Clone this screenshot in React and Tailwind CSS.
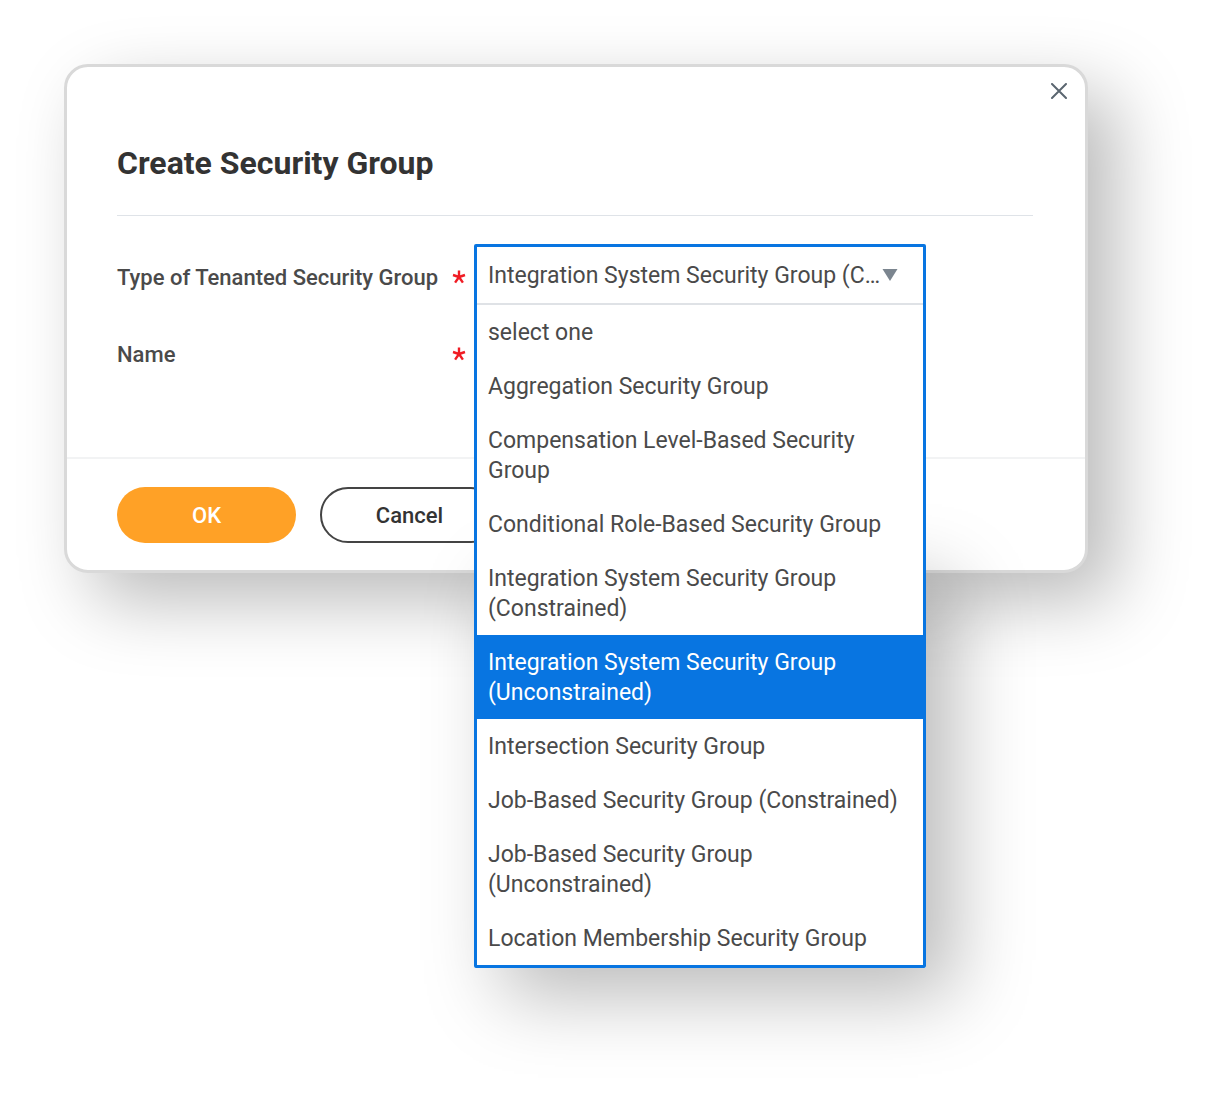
import React, { useState } from 'react';

const options = [
  'select one',
  'Aggregation Security Group',
  'Compensation Level-Based Security Group',
  'Conditional Role-Based Security Group',
  'Integration System Security Group (Constrained)',
  'Integration System Security Group (Unconstrained)',
  'Intersection Security Group',
  'Job-Based Security Group (Constrained)',
  'Job-Based Security Group (Unconstrained)',
  'Location Membership Security Group'
];

const Required = () => (
  <svg viewBox="0 0 14 14" className="w-3.5 h-3.5 text-[#f01c24]" fill="none" stroke="currentColor" strokeWidth="2.4" aria-hidden="true">
    <path d="M7 7V0.5M7 7L13 5M7 7L10.9 12.6M7 7L3.1 12.6M7 7L1 5" />
  </svg>
);

const TypeDropdown = () => {
  const [value, setValue] = useState('Integration System Security Group (Constrained)');
  const [active, setActive] = useState('Integration System Security Group (Unconstrained)');

  return (
    <div className="absolute left-0 top-0 w-full z-10 text-[23px]">
      {/* Shadow under the part that hangs below the dialog */}
      <div className="absolute inset-x-0 bottom-0 top-[310px] shadow-[28px_28px_72px_rgba(0,0,0,0.27)]"></div>

      <div className="relative bg-white border-3 border-[#0875e1] rounded-xs">
        <div className="relative border-b-2 border-[#dfe2e6]">
          <select
            id="group-type"
            value={value}
            onChange={(e) => setValue(e.target.value)}
            className="block w-full h-14 appearance-none pt-0.5 pl-[11px] pr-10 truncate bg-white outline-none"
          >
            {options.map((option) => (
              <option key={option}>{option}</option>
            ))}
          </select>
          <svg viewBox="0 0 16 12" className="absolute right-[25px] top-[22px] w-4 h-3 pointer-events-none" aria-hidden="true">
            <path d="M0.5 0H15.5L8 12Z" fill="#7b858f" />
          </svg>
        </div>

        <ul role="listbox" aria-label="Type of Tenanted Security Group">
          {options.map((option) => (
            <li
              key={option}
              role="option"
              aria-selected={option === active}
              onMouseEnter={() => setActive(option)}
              onClick={() => setValue(option)}
              className={`pl-[11px] pr-5 pt-[13px] pb-[11px] leading-[30px] cursor-pointer ${option === active ? 'bg-[#0875e1] text-white' : ''}`}
            >
              {option}
            </li>
          ))}
        </ul>
      </div>
    </div>
  );
};

const App = () => {
  return (
    <div className="min-h-screen bg-white pt-16 pl-16 pr-[126px] pb-[522px] font-[Roboto,sans-serif] text-[22px] text-[#4a4a4a]">
      <div
        role="dialog"
        aria-labelledby="dialog-title"
        className="relative bg-white border-3 border-[#d9d9d9] rounded-3xl shadow-[28px_28px_72px_rgba(0,0,0,0.27)]"
      >
        {/* Close */}
        <button type="button" aria-label="Close" className="absolute right-4 top-3.5 w-5 h-5 flex items-center justify-center">
          <svg viewBox="0 0 16 16" className="w-4 h-4" fill="none" stroke="#5b6670" strokeWidth="2" strokeLinecap="round" aria-hidden="true">
            <path d="M1 1L15 15M15 1L1 15" />
          </svg>
        </button>

        {/* Header and fields */}
        <div className="pl-[50px] pr-[52px] pt-[76px] pb-[81px]">
          <h1 id="dialog-title" className="text-[32px] leading-10 font-bold text-[#333333]">Create Security Group</h1>
          <hr className="mt-8 border-[#dfe3e8]" />

          <div className="mt-7 grid grid-cols-[349px_452px] gap-x-2">
            <div className="h-[66px] flex items-center justify-between">
              <label htmlFor="group-type" className="font-medium whitespace-nowrap">Type of Tenanted Security Group</label>
              <Required />
            </div>
            <div className="relative">
              <TypeDropdown />
            </div>
            <div className="mt-[22px] h-11 flex items-center justify-between">
              <label htmlFor="group-name" className="font-medium">Name</label>
              <Required />
            </div>
            <div className="mt-[22px]">
              <input id="group-name" type="text" className="w-full h-11 border border-[#ced3d9] rounded px-3" />
            </div>
          </div>
        </div>

        {/* Actions */}
        <div className="flex gap-6 px-[50px] pt-7 pb-[27px] border-t-2 border-[#f2f3f4] font-medium">
          <button type="button" className="w-[179px] h-14 rounded-full bg-[#ffa126] text-white">OK</button>
          <button type="button" className="w-[179px] h-14 rounded-full border-2 border-[#444444] bg-white text-[#333333]">Cancel</button>
        </div>
      </div>
    </div>
  );
};

export default App;
